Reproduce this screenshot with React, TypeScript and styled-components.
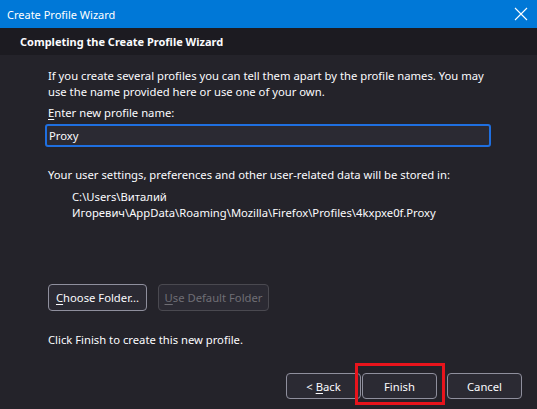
import React from "react";
import styled, { createGlobalStyle } from "styled-components";

const Global = createGlobalStyle`
  html, body { margin: 0; padding: 0; background: #24232a; }
  body { font-family: "Noto Sans", "Open Sans", sans-serif; font-size: 11.25px; color: #fbfbfe; }
`;

const Window = styled.div`
  width: 537px;
  height: 409px;
  display: flex;
  flex-direction: column;
  background: #24232a;
  overflow: hidden;
`;

const TitleBar = styled.div`
  height: 28px;
  background: #0078d7;
  display: flex;
  align-items: center;
  justify-content: space-between;
  padding: 0 9px 0 7px;
  color: #fff;
  font-size: 11px;
`;

const Header = styled.div`
  height: 27px;
  background: #1c1b21;
  display: flex;
  align-items: center;
  padding-left: 20px;
  font-weight: 700;
  font-size: 11px;
`;

const Body = styled.div`
  flex: 1;
  display: flex;
  flex-direction: column;
  padding: 13px 44px 0 48px;
`;

const Text = styled.div<{ $mt?: number; $indent?: number }>`
  line-height: 16px;
  margin-top: ${(p) => p.$mt ?? 0}px;
  padding-left: ${(p) => p.$indent ?? 0}px;
`;

const Input = styled.input`
  margin: 3px 0 0 -3px;
  width: 446px;
  height: 23px;
  box-sizing: border-box;
  background: #2b2a33;
  border: 2px solid #1f6fe0;
  border-radius: 3px;
  color: #fbfbfe;
  font-family: inherit;
  font-size: 11.25px;
  padding: 0 2px;
  outline: none;
`;

const Row = styled.div<{ $mt?: number; $gap?: number }>`
  display: flex;
  gap: ${(p) => p.$gap ?? 0}px;
  margin-top: ${(p) => p.$mt ?? 0}px;
`;

const Button = styled.button<{ $w: number; $h?: number; $disabled?: boolean }>`
  width: ${(p) => p.$w}px;
  height: ${(p) => p.$h ?? 27}px;
  box-sizing: border-box;
  background: #2b2a33;
  border: 1px solid ${(p) => (p.$disabled ? "#4a4950" : "#8f8f9d")};
  border-radius: 4px;
  color: ${(p) => (p.$disabled ? "#6f6e75" : "#fbfbfe")};
  font-family: inherit;
  font-size: 11.25px;
  padding: 0;
  display: flex;
  align-items: center;
  justify-content: center;
`;

const Footer = styled.div`
  display: flex;
  justify-content: flex-end;
  padding: 0 15px 10px 0;
  margin-top: auto;
`;

const Highlight = styled.div`
  position: relative;
  &::after {
    content: "";
    position: absolute;
    left: -7px;
    top: -10px;
    right: -8px;
    bottom: -6px;
    border: 3px solid #e8141c;
    pointer-events: none;
  }
`;

const BtnGroup = styled.div`
  display: flex;
  gap: 10px;
  align-items: center;
`;

const Pair = styled.div`
  display: flex;
  gap: 1px;
`;

const U = styled.span`
  text-decoration: underline;
  text-underline-offset: 2px;
`;

export default function App() {
  return (
    <>
      <Global />
      <Window>
        <TitleBar>
          <span>Create Profile Wizard</span>
          <svg width="14" height="14" viewBox="0 0 14 14">
            <path d="M1 1 L13 13 M13 1 L1 13" stroke="#fff" strokeWidth="1.1" fill="none" />
          </svg>
        </TitleBar>
        <Header>Completing the Create Profile Wizard</Header>
        <Body>
          <Text>
            If you create several profiles you can tell them apart by the profile names. You may use
            the name provided here or use one of your own.
          </Text>
          <Text $mt={5}>
            <U>E</U>nter new profile name:
          </Text>
          <Input defaultValue="Proxy" />
          <Text $mt={20}>Your user settings, preferences and other user-related data will be stored in:</Text>
          <Text $mt={6} $indent={24}>
            C:\Users\Виталий
            <br />
            Игоревич\AppData\Roaming\Mozilla\Firefox\Profiles\4kxpxe0f.Proxy
          </Text>
          <Row $mt={63} $gap={11}>
            <Button $w={99}>
              <U>C</U>hoose Folder...
            </Button>
            <Button $w={111} $disabled>
              <U>U</U>se Default Folder
            </Button>
          </Row>
          <Text $mt={21}>Click Finish to create this new profile.</Text>
        </Body>
        <Footer>
          <BtnGroup>
            <Pair>
              <Button $w={75} $h={26}>
                &lt;&nbsp;<U>B</U>ack
              </Button>
              <Highlight>
                <Button $w={75} $h={26}>
                  Finish
                </Button>
              </Highlight>
            </Pair>
            <Button $w={75} $h={26}>
              Cancel
            </Button>
          </BtnGroup>
        </Footer>
      </Window>
    </>
  );
}
